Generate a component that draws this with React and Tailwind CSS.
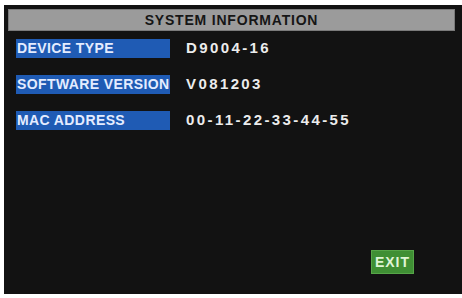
import React from "react";

const rows = [
  { label: "DEVICE TYPE", value: "D9004-16" },
  { label: "SOFTWARE VERSION", value: "V081203" },
  { label: "MAC ADDRESS", value: "00-11-22-33-44-55" },
];

export default function App() {
  return (
    <div
      className="w-[462px] h-[298px] bg-white pl-[4px] pt-[5px] pb-[4px] flex"
      style={{ fontFamily: '"Liberation Sans", Arial, sans-serif' }}
    >
      <div className="flex-1 bg-[#121212] flex flex-col pt-[4px]">
        {/* Title bar */}
        <div className="ml-[4px] mr-[7px] h-[22px] bg-[#9b9b9b] border border-[#7a7a7a] flex items-center justify-center">
          <span className="text-[14px] font-bold text-[#161616] tracking-[0.8px]">
            SYSTEM INFORMATION
          </span>
        </div>

        {/* Info rows */}
        <div className="flex flex-col gap-[17px] mt-[8px] pl-[12px]">
          {rows.map((r) => (
            <div key={r.label} className="flex items-center h-[19px]">
              <div className="w-[154px] h-full bg-[#1f5bb4] flex items-center pl-[1px] overflow-hidden">
                <span className="text-[14px] font-bold text-[#e4ecff] tracking-[0.4px] whitespace-nowrap">
                  {r.label}
                </span>
              </div>
              <span className="ml-[16px] text-[15px] font-bold text-[#ececec] tracking-[2.4px] whitespace-nowrap">
                {r.value}
              </span>
            </div>
          ))}
        </div>

        <div className="flex-1" />

        {/* Exit button */}
        <div className="flex justify-end pr-[48px] pb-[20px]">
          <div className="w-[43px] h-[24px] bg-[#3f8f34] border border-[#56a548] flex items-center justify-center">
            <span className="text-[14px] font-bold text-[#dff5d6] tracking-[1px]">
              EXIT
            </span>
          </div>
        </div>
      </div>
    </div>
  );
}
